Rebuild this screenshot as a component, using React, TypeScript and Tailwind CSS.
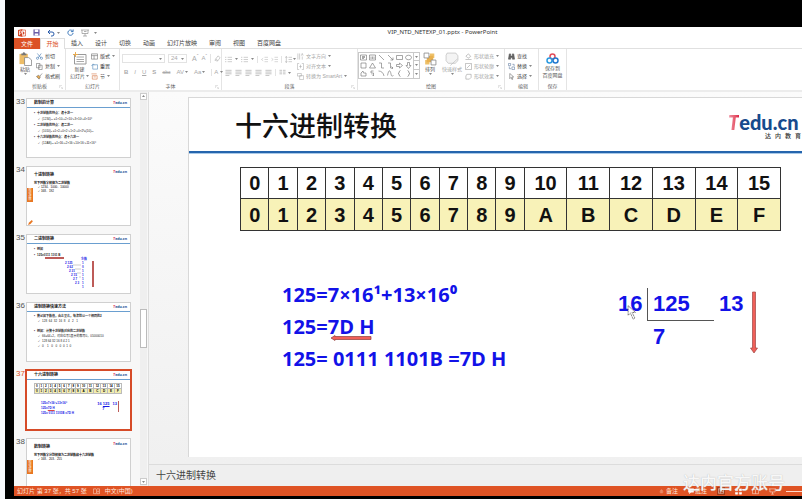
import type { ReactNode } from "react";

const INK = "#666";

function Glyph({ d, className, stroke = INK, fill = "none", box = "0 0 16 16", width = 1.3 }: {
  d: string; className: string; stroke?: string; fill?: string; box?: string; width?: number;
}) {
  return (
    <svg viewBox={box} className={className} fill={fill} stroke={stroke} strokeWidth={width} aria-hidden="true">
      <path d={d} />
    </svg>
  );
}

function Caret() {
  return (
    <svg viewBox="0 0 6 4" className="h-[2px] w-[3px] shrink-0" aria-hidden="true">
      <path d="M0 0h6L3 4z" fill="#888" />
    </svg>
  );
}

function Group({ label, className, launcher = true, children }: {
  label: string; className: string; launcher?: boolean; children: ReactNode;
}) {
  return (
    <section aria-label={label} className={`flex shrink-0 flex-col border-r border-[#e4e4e4] ${className}`}>
      <div className="flex flex-1 pt-[2px]">{children}</div>
      <div className="relative h-[8px] text-center leading-[8px] text-[#666]">
        {label}
        {launcher && <Glyph d="M2 2v10M2 2h10M6 6l8 8M14 9v5H9" className="absolute right-[2px] bottom-[1px] size-[4px]" stroke="#aaa" />}
      </div>
    </section>
  );
}

function Command({ icon, label, menu = false, muted = false }: {
  icon: ReactNode; label: string; menu?: boolean; muted?: boolean;
}) {
  return (
    <button type="button" className={`flex h-[10px] items-center gap-[2px] whitespace-nowrap ${muted ? "text-[#a5a5a5]" : "text-[#444]"}`}>
      {icon}
      <span>{label}</span>
      {menu && <Caret />}
    </button>
  );
}

const tabs = ["插入", "设计", "切换", "动画", "幻灯片放映", "审阅", "视图", "百度网盘"];

function TitleBar() {
  return (
    <header className="relative flex h-[11px] shrink-0 items-center gap-[7px] bg-white pl-[4px]">
      <svg viewBox="0 0 16 16" className="size-[8px]" aria-label="PowerPoint">
        <path d="M0 2l9-2v16l-9-2z" fill="#d24726" />
        <path d="M9 2h6v12H9" fill="#fff" stroke="#d24726" strokeWidth="1.3" />
        <path d="M10 5a3 3 0 1 1 0 6z" fill="#d24726" />
        <path d="M3 12V4h2.300a2.300 2.300 0 0 1 0 4.600H3" fill="none" stroke="#fff" strokeWidth="1.500" />
      </svg>
      <button type="button" aria-label="保存">
        <svg viewBox="0 0 16 16" className="size-[7px]">
          <path d="M1 1h14v14H1z" fill="#6b5fa8" />
          <path d="M4 1h8v6H4zM4 10h8v5H4z" fill="#fff" />
        </svg>
      </button>
      <button type="button" aria-label="撤消" className="flex items-center gap-[2px]">
        <Glyph d="M6 2L2 6l4 4M2 6h8a4 4 0 0 1 0 8H8" className="size-[8px]" stroke="#2a5caa" width={2} />
        <Caret />
      </button>
      <button type="button" aria-label="重复">
        <Glyph d="M13 5a6 6 0 1 0 1 4M14 1v5H9" className="size-[7px]" stroke="#2a6cb4" width={2} />
      </button>
      <button type="button" aria-label="从头开始" className="flex items-center gap-[5px]">
        <Glyph d="M0 2h16M2 2v7h12V2M8 9v5M4 14h8M6 5h5" className="size-[8px]" stroke="#888" />
        <Caret />
      </button>
      <h1 className="absolute inset-x-0 pl-[69px] text-center font-['Noto_Sans','Noto_Sans_CJK_SC',sans-serif] text-[6px] leading-[11px] text-[#333]">
        VIP_NTD_NETEXP_01.pptx - PowerPoint
      </h1>
    </header>
  );
}

function Tabs() {
  return (
    <nav className="flex h-[11px] shrink-0 border-b border-[#e0e0e0] bg-white text-[6px] leading-[10px] text-[#444]">
      <button type="button" className="h-[11px] w-[26px] bg-[#dc5125] text-white">文件</button>
      <button type="button" className="h-[11px] w-[25px] border-x border-t border-[#dedede] bg-white leading-[9px] text-[#dc5125]">开始</button>
      <div className="flex gap-[12px] pl-[6px]">
        {tabs.map((t) => <button type="button" key={t}>{t}</button>)}
      </div>
    </nav>
  );
}

const shapes = [
  "M1 2h12v10H1zM4 5h6M4 7h6M4 9h4", "M1 2h12v10H1zM4 5v5M7 5v5M10 5v5", "M2 2l10 10", "M2 2l10 10M12 7v5H7", "M1 3h12v8H1z", "M7 2.500a6 4.500 0 1 0 .1 0z",
  "M2 2h10v10H2z", "M7 2l6 10H1z", "M2 2h5v10h5", "M2 2h5v10h5M9 9l3 3-3 2", "M1 5h6V2l6 5-6 5V9H1z", "M5 1v6H2l5 6 5-6H9V1z",
  "M2 12V6l4-4 1 4h5v6z", "M9 2H4v4h5v6M6 9l3 3", "M1 2c6 0 10 4 11 10", "M1 11C4-4 7 2 8 8s3 4 5 3", "M9 1C5 1 8 7 4 7c4 0 1 6 5 6", "M5 1c4 0 1 6 5 6-4 0-1 6-5 6",
];

const lines = "M1 3h14M1 7h14M1 11h14M1 15h9";
const list = "M0 3h3M6 3h10M0 8h3M6 8h10M0 13h3M6 13h10";

function Ribbon() {
  const sm = "size-[7px] shrink-0";
  return (
    <div className="flex h-[43px] shrink-0 overflow-hidden border-b-2 border-[#ececec] bg-white text-[5px] leading-[7px]">
      <Group label="剪贴板" className="w-[52px]">
        <button type="button" className="flex w-[22px] flex-col items-center pt-[1px] text-[#555]">
          <svg viewBox="0 0 28 30" className="h-[14px] w-[13px]" aria-hidden="true">
            <path d="M1 4h18v22H1z" fill="#edbd68" /><path d="M5 7V3h3a2 2 0 0 1 5 0h3v4z" fill="#777" />
            <path d="M12 12h9l6 5v12H12z" fill="#fff" stroke="#777" strokeWidth="1.500" />
          </svg>
          <span>粘贴</span><Caret />
        </button>
        <div>
          <Command label="剪切" icon={<Glyph d="M3 1l8 10M12 1L5 11M1 12a2 2 0 1 0 5 0 2 2 0 1 0-5 0M10 12a2 2 0 1 0 5 0 2 2 0 1 0-5 0" className={sm} stroke="#3972ad" />} />
          <Command label="复制" menu icon={<Glyph d="M1 1h8v10H1zM6 5h8v10H6z" className={sm} fill="#fff" />} />
          <Command label="格式刷" icon={<Glyph d="M1 8l6 6 3-5-4-4zM9 7l5-6" className={sm} fill="#e9ac51" stroke="#666" />} />
        </div>
      </Group>
      <Group label="幻灯片" className="w-[54px]" launcher={false}>
        <button type="button" className="flex w-[25px] flex-col items-center pt-[1px] pl-[2px] text-[#555]">
          <svg viewBox="0 0 28 28" className="size-[14px]" aria-hidden="true">
            <path d="M3 5h23v19H3z" fill="#fff" stroke="#999" strokeWidth="2" /><path d="M7 10h15M7 15h15M7 19h15" stroke="#aaa" strokeWidth="2" />
            <path d="M5 0v10M0 5h10" stroke="#e9ac51" strokeWidth="2" />
          </svg>
          <span>新建</span>
          <span className="flex items-center gap-[1px] whitespace-nowrap leading-[6px]">幻灯片<Caret /></span>
        </button>
        <div>
          <Command label="版式" menu icon={<Glyph d="M1 2h14v12H1zM1 6h14M7 6v8" className={sm} />} />
          <Command label="重置" icon={<Glyph d="M4 4h11v10H4zM1 7l4-5 3 3" className={sm} stroke="#4b83b6" />} />
          <Command label="节" menu icon={<Glyph d="M1 2h12M3 6h11v8H3zM6 9h5" className={sm} stroke="#d4733f" />} />
        </div>
      </Group>
      <Group label="字体" className="w-[102px]">
        <div className="flex-1 pt-[2px] pl-[2px] text-[#aaa]">
          <div className="flex h-[11px] items-center gap-[3px]">
            <span className="flex h-[9px] w-[43px] items-center justify-end border border-[#e3e3e3] pr-[2px]">
              <select aria-label="字体" className="flex-1 appearance-none"><option></option></select><Caret />
            </span>
            <span className="flex h-[9px] w-[19px] items-center border border-[#e3e3e3] px-[2px]">
              <select aria-label="字号" className="min-w-0 flex-1 appearance-none text-[6px] leading-[7px]"><option>24</option></select><Caret />
            </span>
            <button type="button" className="pl-[2px] text-[7px]">A<sup>ˆ</sup></button>
            <button type="button" className="text-[6px]">A<sup>ˇ</sup></button>
            <span className="h-[9px] border-l border-[#e3e3e3]" />
            <button type="button" aria-label="清除格式"><Glyph d="M2 12L9 2l5 4-6 8zM4 9l5 4" className="size-[7px]" stroke="#aaa" /></button>
          </div>
          <div className="flex h-[14px] items-center gap-[6px] pt-[2px] pl-[2px] text-[6px]">
            <button type="button" className="font-bold">B</button>
            <button type="button" className="italic">I</button>
            <button type="button" className="underline">U</button>
            <button type="button" className="font-bold">S</button>
            <button type="button" className="text-[5px] line-through">abc</button>
            <button type="button" className="flex items-center gap-[1px]">AV<Caret /></button>
            <button type="button" className="flex items-center gap-[1px]">Aa<Caret /></button>
            <button type="button" className="flex items-center gap-[2px] border-l border-[#e3e3e3] pl-[2px]">A<Caret /></button>
          </div>
        </div>
      </Group>
      <Group label="段落" className="w-[136px]">
        <div className="w-[75px] pt-[2px] pl-[3px]">
          <div className="flex h-[12px] items-center gap-[3px]">
            {["项目符号", "编号"].map((n) => (
              <button type="button" key={n} aria-label={n} className="flex items-center gap-[3px]"><Glyph d={list} className="size-[7px]" stroke="#aaa" /><Caret /></button>
            ))}
            <button type="button" aria-label="减少缩进" className="border-l border-[#e3e3e3] pl-[3px]"><Glyph d="M8 3h8M8 8h8M8 13h8M5 5L1 8l4 3" className="size-[7px]" stroke="#bbb" /></button>
            <button type="button" aria-label="增加缩进"><Glyph d="M8 3h8M8 8h8M8 13h8M1 5l4 3-4 3" className="size-[7px]" stroke="#bbb" /></button>
            <button type="button" aria-label="行距" className="flex items-center gap-[1px] border-l border-[#e3e3e3] pl-[3px]"><Glyph d="M3 1v14M1 4l2-3 2 3M1 12l2 3 2-3M8 3h8M8 8h8M8 13h8" className="size-[7px]" stroke="#aaa" /><Caret /></button>
          </div>
          <div className="flex h-[15px] items-center gap-[3px]">
            {["左对齐", "居中", "右对齐", "两端对齐", "分散对齐"].map((n) => (
              <button type="button" key={n} aria-label={n}><Glyph d={lines} className="size-[7px]" stroke="#999" /></button>
            ))}
            <button type="button" aria-label="分栏" className="flex items-center gap-[2px] border-l border-[#e3e3e3] pl-[3px]"><Glyph d="M1 3h6M1 7h6M1 11h6M9 3h6M9 7h6M9 11h6" className="size-[7px]" stroke="#999" /><Caret /></button>
          </div>
        </div>
        <div>
          <Command muted menu label="文字方向" icon={<Glyph d="M2 1v14M6 1v14M10 6l2-5 2 5M12 8v7" className={sm} stroke="#aaa" />} />
          <Command muted menu label="对齐文本" icon={<Glyph d="M5 1H1v14h4M11 1h4v14h-4M5 8h6M8 4v8" className={sm} stroke="#aaa" />} />
          <Command muted menu label="转换为 SmartArt" icon={<Glyph d="M1 1h9v6H1zM6 6h9v9H6z" className={sm} stroke="#aaa" fill="#fff" />} />
        </div>
      </Group>
      <Group label="绘图" className="w-[147px]">
        <div className="mt-[1px] flex h-[27px] border border-[#c9c9c9]">
          <div className="grid w-[54px] grid-cols-6">
            {shapes.map((d) => (
              <button type="button" key={d} aria-label="形状" className="grid place-items-center"><Glyph d={d} box="0 0 14 14" className="size-[7px]" stroke="#777" /></button>
            ))}
          </div>
          <div className="grid w-[6px] grid-rows-3 divide-y divide-[#c9c9c9] border-l border-[#c9c9c9]">
            {["向上", "向下", "其他"].map((n) => <button type="button" key={n} aria-label={n} className="grid place-items-center"><Caret /></button>)}
          </div>
        </div>
        <button type="button" className="flex w-[20px] flex-col items-center pt-[1px] text-[#555]">
          <svg viewBox="0 0 26 26" className="size-[14px]" aria-hidden="true">
            <path d="M13 3h8v8h-8zM4 15h8v8H4z" fill="#eec169" /><path d="M7 7h12v12H7z" fill="#e9b04e" /><path d="M2 2h9v9H2zM15 15h9v9h-9z" fill="#fff" stroke="#888" strokeWidth="1.500" />
          </svg>
          <span>排列</span><Caret />
        </button>
        <button type="button" className="flex w-[24px] flex-col items-center pt-[1px] text-[#a5a5a5]">
          <Glyph d="M4 2h16l4 5v9l-5 5H6l-4-5V6zM10 25l13-12" box="0 0 26 26" className="size-[14px]" fill="#f4f4f4" stroke="#bbb" />
          <span>快速样式</span><Caret />
        </button>
        <div className="pl-[1px]">
          <Command muted menu label="形状填充" icon={<Glyph d="M2 7l6-5 5 6-6 4zM1 15h14" className={sm} stroke="#999" />} />
          <Command muted menu label="形状轮廓" icon={<Glyph d="M1 1h14v14H1zM4 12l8-8" className={sm} stroke="#999" />} />
          <Command muted menu label="形状效果" icon={<Glyph d="M4 3h10v7l-4 4H2V7z" className={sm} stroke="#999" />} />
        </div>
      </Group>
      <Group label="编辑" className="w-[34px] pl-[3px]" launcher={false}>
        <div>
          <Command label="查找" icon={<Glyph d="M3 2h3v5h4V2h3l2 12h-5v-4H6v4H1z" className={sm} stroke="#555" fill="#666" />} />
          <Command label="替换" menu icon={<Glyph d="M1 1h5v5H1zM9 9h6v6H9zM3 8v5h4M10 3h4v4" className={sm} stroke="#58749b" />} />
          <Command label="选择" menu icon={<Glyph d="M4 1v12l3-3 2 5 2-1-2-5h4z" className={sm} />} />
        </div>
      </Group>
      <Group label="保存" className="w-[28px]" launcher={false}>
        <button type="button" className="flex flex-1 flex-col items-center pt-[2px] text-[#555]">
          <svg viewBox="0 0 26 22" className="h-[11px] w-[13px]" fill="none" strokeWidth="3" aria-hidden="true">
            <circle cx="13" cy="7" r="5" stroke="#e34c5a" /><circle cx="7" cy="15" r="5" stroke="#2a9ae0" /><circle cx="19" cy="15" r="5" stroke="#2278cf" />
          </svg>
          <span className="pt-[1px]">保存到</span>
          <span className="whitespace-nowrap leading-[6px]">百度网盘</span>
        </button>
      </Group>
    </div>
  );
}

function MiniHeader({ title, line = true }: { title: string; line?: boolean }) {
  return (
    <span className={`flex shrink-0 items-start justify-between pr-[4px] pl-[8px] ${line ? "h-[10px] border-b border-[#6a9fd0] pt-[2px]" : "h-[14px] pt-[3px]"}`}>
      <span className={`text-[4px] leading-[6px] font-bold text-[#222] ${line ? "" : "pt-[3px]"}`}>{title}</span>
      <span className="font-['Lato',sans-serif] text-[4px] leading-[5px] font-black text-[#1c4f93]"><span className="text-[#dd3b5b] italic">T</span>edu.cn</span>
    </span>
  );
}

function MiniBadge() {
  return <span className="absolute top-[22px] left-[1px] flex h-[14px] w-[6px] items-center justify-center bg-[#e87722] px-[1px] text-center text-[3px] leading-[3px] text-white">知识讲解</span>;
}

const top = ["0", "1", "2", "3", "4", "5", "6", "7", "8", "9", "10", "11", "12", "13", "14", "15"];
const bottom = ["0", "1", "2", "3", "4", "5", "6", "7", "8", "9", "A", "B", "C", "D", "E", "F"];

function HexTable({ mini = false }: { mini?: boolean }) {
  const edge = mini ? "border border-[#bbb]" : "border border-[#333]";
  const first = mini ? "h-[5px]" : "h-[31px]";
  const second = mini ? "h-[5px] bg-[#f2edb0]" : "h-[32px] bg-[#f8f2b8]";
  return (
    <table className={mini ? "mt-[3px] ml-[8px] w-[88px] table-fixed border-collapse text-[3px] leading-[4px] font-bold" : "mt-[14px] ml-[51px] w-[541px] shrink-0 table-fixed border-collapse text-[20px] leading-[28px] font-bold text-[#111]"}>
      <colgroup>{top.map((n, i) => <col key={n} className={i < 10 ? "w-[5.25%]" : "w-[7.9%]"} />)}</colgroup>
      <tbody className="text-center">
        <tr className={first}>{top.map((n) => <td key={n} className={`p-0 ${edge}`}>{n}</td>)}</tr>
        <tr className={second}>{bottom.map((n) => <td key={n} className={`p-0 ${edge}`}>{n}</td>)}</tr>
      </tbody>
    </table>
  );
}

function Lines({ rows, dense = false }: { rows: [string, boolean][]; dense?: boolean }) {
  return (
    <span className="flex flex-col pt-[2px] pl-[8px] text-[3px] text-[#222]">
      {rows.map(([t, head], i) => (
        <span key={i} className={`flex gap-[2px] whitespace-pre ${dense ? "leading-[5px]" : "leading-[6px]"} ${head ? "font-bold" : "pl-[4px]"}`}>
          <span>{t.trim() ? (head ? "•" : "✓") : " "}</span>{t}
        </span>
      ))}
    </span>
  );
}

const slides: { n: number; body: ReactNode }[] = [
  { n: 33, body: <><MiniHeader title="数制的计算" /><Lines rows={[["十进制数的特点：逢十进一", true], ["(1234)₁₀ =1×10³+2×10²+3×10¹+4×10⁰", false], ["二进制数的特点：逢二进一", true], ["(1010)₂ =1×2³+0×2²+1×2¹+0×2⁰=(10)₁₀", false], ["十六进制数的特点：逢十六进一", true], ["(12AB)₁₆ =1×16³+2×16²+10×16¹+11×16⁰", false]]} /></> },
  { n: 34, body: <><MiniHeader title="十进制转换" line={false} /><span className="flex flex-col pt-[1px] pl-[8px] text-[3px] leading-[4px]"><b>将下列数字转换为二进制数</b><span className="pl-[4px]">✓ 1234、1000、10000</span><span className="pl-[4px]">✓ 168、192</span></span><MiniBadge /><Glyph d="M1 15l3-7 8-7 3 3-7 8zM4 8l4 4" className="absolute bottom-[1px] left-[2px] size-[5px]" fill="#e87722" stroke="#e87722" /></> },
  { n: 35, body: <><MiniHeader title="二进制转换" /><Lines rows={[["例如", true], ["125=0111 1101 B", true]]} />
    <svg viewBox="0 0 105 60" className="absolute inset-0 size-full" aria-hidden="true">
      <path d="M19 24h19" stroke="#bd5b58" strokeWidth="2" /><path d="M67 27v26" stroke="#bd5b58" strokeWidth="2" />
      <path d="M47 31h8M49 35h6M51 39h4M53 43h2" stroke="#999" strokeWidth=".5" />
      <g fontSize="3" fill="#1616e6" fontWeight="bold"><text x="55" y="26">余数</text><text x="39" y="30">2 125</text><text x="41" y="34">2 62</text><text x="43" y="38">2 31</text><text x="45" y="42">2 15</text><text x="47" y="46">2 7</text><text x="49" y="50">2 3</text><text x="56" y="30">1</text><text x="56" y="34">0</text><text x="56" y="38">1</text><text x="56" y="42">1</text><text x="56" y="46">1</text><text x="56" y="50">1</text><text x="56" y="54">1</text></g>
    </svg></> },
  { n: 36, body: <><MiniHeader title="进制转换快速方法" /><Lines dense rows={[["熟记如下数值，由左至右，每次除以一个相同的2", true], ["128  64  32  16  8   4   2   1", false], [" ", false], ["例如：计算十进制数对应的二进制数", true], ["66=64+2，对应位写1其余的都写0，01000010", false], ["128 64 32 16 8 4 2 1", false], ["0    1   0   0   0  0  1  0", false]]} /></> },
  { n: 37, body: <><MiniHeader title="十六进制转换" /><HexTable mini />
    <span className="flex justify-between pt-[7px] pr-[12px] pl-[15px] font-bold text-[#1616e6]">
      <span className="flex flex-col text-[3px] leading-[5px]"><span>125=7×16¹+13×16⁰</span><span>125=<u className="decoration-[#d44]">7D H</u></span><span>125= 0111 1101B =7D H</span></span>
      <span className="flex h-[11px] gap-[3px] border-r border-[#bd5b58] pr-[1px] text-[4px] leading-[5px]"><span>16 <u>125</u><br /><span className="pl-[5px]">7</span></span><span>13</span></span>
    </span></> },
  { n: 38, body: <><MiniHeader title="数制转换" line={false} /><span className="flex flex-col pt-[1px] pl-[8px] text-[3px] leading-[4px]"><b>将下列数字分别转换为二进制数和十六进制数</b><span className="pl-[4px]">✓ 168、203、255</span></span><MiniBadge /></> },
];

function Thumbnails() {
  return (
    <aside aria-label="幻灯片缩略图" className="flex w-[135px] shrink-0 overflow-hidden border-r border-[#dedede] bg-[#f7f7f7]">
      <ol className="flex w-[126px] shrink-0 flex-col gap-[8px] pt-[6px]">
        {slides.map(({ n, body }) => (
          <li key={n} className="flex shrink-0">
            <span className={`w-[12px] pl-[2px] text-[8px] leading-[8px] ${n === 37 ? "text-[#dc5125]" : "text-[#555]"}`}>{n}</span>
            <button type="button" aria-label={`幻灯片 ${n}`} className={`relative flex h-[60px] w-[105px] flex-col items-stretch justify-start overflow-hidden bg-white text-left outline ${n === 37 ? "outline-2 -outline-offset-1 outline-[#d64b28]" : "outline-1 -outline-offset-1 outline-[#d0d0d0]"}`}>
              {body}
            </button>
          </li>
        ))}
      </ol>
      <div className="flex w-[7px] flex-col justify-between bg-[#efefef] py-[1px]">
        <button type="button" aria-label="向上滚动" className="grid h-[7px] rotate-180 place-items-center border border-[#ccc] bg-white"><Caret /></button>
        <div className="mt-[78px] h-[39px] border border-[#bbb] bg-white" />
        <button type="button" aria-label="向下滚动" className="grid h-[7px] place-items-center border border-[#ccc] bg-white"><Caret /></button>
      </div>
    </aside>
  );
}

function Slide() {
  return (
    <article className="flex min-h-0 flex-1 flex-col overflow-hidden border-t border-l border-[#d8d8d8] bg-white">
      <div className="flex h-[55px] shrink-0 justify-between border-b-2 border-[#2565ad] pl-[46px] shadow-[0_1px_0_#a9c9e8]">
        <h2 className="pt-[13px] text-[27px] leading-[32px] font-medium text-[#111]">十六进制转换</h2>
        <div className="w-[74px] shrink-0 pt-[14px]">
          <div className="flex font-['Lato',sans-serif] text-[20px] leading-[20px] font-black text-[#174a8d]">
            <span className="bg-linear-to-r from-[#ef9aac] to-[#dc1f48] bg-clip-text text-transparent italic">T</span>
            <span>edu.cn</span>
          </div>
          <div className="flex gap-[4px] pl-[37px] text-[6px] leading-[8px] font-medium text-[#333]">
            {["达", "内", "教", "育"].map((c) => <span key={c}>{c}</span>)}
          </div>
        </div>
      </div>
      <HexTable />
      <div className="flex pt-[48px] pl-[93px] font-bold whitespace-nowrap text-[#1212e8]">
        <div className="w-[336px] shrink-0 font-['Open_Sans',sans-serif] text-[20px] leading-[32px]">
          <p>125=7×16¹+13×16⁰</p>
          <p>
            125=
            <span className="relative">
              7D H
              <svg viewBox="0 0 42 6" className="absolute -bottom-[1px] left-[2px] h-[6px] w-[42px]" aria-hidden="true">
                <path d="M1 3l4-2.500v1h36v3H5v1z" fill="#f06059" stroke="#8e3d3a" strokeWidth=".7" />
              </svg>
            </span>
          </p>
          <p>125= 0111 1101B =7D H</p>
        </div>
        <div className="flex pt-[9px] text-[22px] leading-[32px]">
          <div className="relative w-[29px]">
            16
            <svg viewBox="0 0 16 28" className="absolute top-[17px] left-[9px] h-[16px] w-[9px]" aria-hidden="true">
              <path d="M2 1v17l4-4 5 11 3-2-5-10h6z" fill="#fff" stroke="#555" strokeWidth="1.500" strokeDasharray="2 1" />
            </svg>
          </div>
          <div className="w-[67px]">
            <div className="h-[33px] border-b border-l border-[#555] pl-[5px]">125</div>
            <div className="pl-[6px]">7</div>
          </div>
          <div className="pl-[5px]">13</div>
          <svg viewBox="0 0 8 63" className="mt-[3px] ml-[7px] h-[63px] w-[8px]" aria-hidden="true">
            <path d="M2.500 1h3v56h2L4 62 .5 57h2z" fill="#f06059" stroke="#9e4644" strokeWidth=".7" />
          </svg>
        </div>
      </div>
    </article>
  );
}

function StatusBar() {
  return (
    <footer className="relative flex h-[10px] shrink-0 items-center bg-[#df5324] pl-[3px] text-[6px] leading-[10px] whitespace-nowrap text-[#ffe9df]">
      <span>幻灯片 第 37 张，共 57 张</span>
      <Glyph d="M1 2h6l1 1 1-1h6v11H9l-1 1-1-1H1zM8 3v10M10 6l3 4M13 6l-3 4" className="ml-[6px] size-[7px]" stroke="#ffd9c8" />
      <span className="pl-[5px]">中文(中国)</span>
      <div className="ml-auto flex items-center gap-[10px]">
        <button type="button" className="flex items-center gap-[2px]"><Glyph d="M2 9h12M4 12h8M8 2l3 4H5z" className="size-[5px]" stroke="#ffd9c8" />备注</button>
        <button type="button" className="flex items-center gap-[1px]"><Glyph d="M1 2h14v9H8l-4 4v-4H1z" className="size-[6px]" stroke="#fff" fill="#fff" />批注</button>
        <button type="button" aria-label="普通视图" className="bg-[#a83b16] p-[1px]"><Glyph d="M1 2h14v12H1zM6 2v12M6 9h9" className="size-[6px]" stroke="#fff" /></button>
        <button type="button" aria-label="幻灯片浏览"><Glyph d="M1 2h5v4H1zM10 2h5v4h-5zM1 10h5v4H1zM10 10h5v4h-5z" className="size-[7px]" stroke="#fff" fill="#fff" /></button>
        <button type="button" aria-label="阅读视图"><Glyph d="M1 3h6l1 1 1-1h6v10H1zM8 4v9" className="size-[7px]" stroke="#ffe3d6" /></button>
        <button type="button" aria-label="幻灯片放映"><Glyph d="M0 2h16M2 2v7h12V2M8 9v5M5 14h6" className="size-[7px]" stroke="#ffe3d6" /></button>
        <span className="w-[16px] border-t border-[#ffd9c8]" />
      </div>
      <div className="pointer-events-none absolute right-[17px] bottom-[1px] text-[17px] leading-[22px] font-medium text-white/90 [text-shadow:0_0_1px_#aaa]">达内官方账号</div>
    </footer>
  );
}

export default function App() {
  return (
    <div className="flex h-screen overflow-hidden bg-[#f7f9fc] pl-[5px] font-['Liberation_Sans','Noto_Sans_CJK_SC',sans-serif]">
      <div className="flex min-w-0 flex-1 flex-col bg-black pt-[27px] pb-[3px] pl-[9px]">
        <TitleBar />
        <Tabs />
        <Ribbon />
        <main className="flex min-h-0 flex-1">
          <Thumbnails />
          <div className="flex min-w-0 flex-1 flex-col bg-[#f5f5f5]">
            <div className="flex min-h-0 flex-1 bg-linear-to-b from-[#fbfbfb] to-[#f0f0f0] pt-[5px] pb-[7px] pl-[39px]">
              <Slide />
            </div>
            <textarea aria-label="备注" defaultValue="十六进制转换" className="block h-[22px] shrink-0 resize-none overflow-hidden border-t border-[#dcdcdc] bg-[#efefef] py-[3px] pl-[7px] text-[10px] leading-[15px] text-[#444]" />
          </div>
        </main>
        <StatusBar />
      </div>
    </div>
  );
}
